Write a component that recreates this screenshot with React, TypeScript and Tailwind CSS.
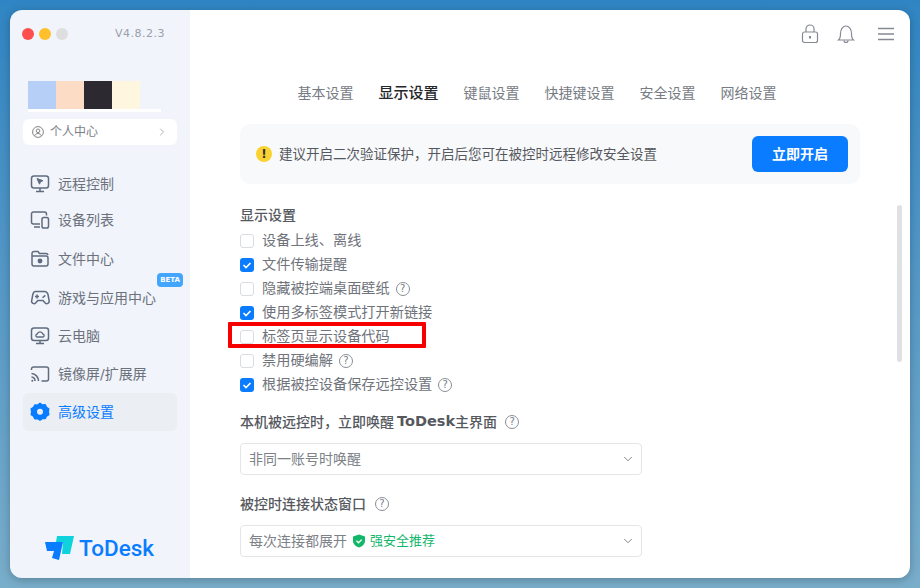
import { ChevronDown, ChevronRight } from 'lucide-react';

const FONT = '[font-family:"DejaVu_Sans","Noto_Sans_CJK_SC",sans-serif]';

function MonitorCursorIcon() {
  return (
    <svg width="20" height="20" viewBox="0 0 20 20" fill="none" stroke="#5f6b7e" strokeWidth="1.5">
      <rect x="1.5" y="2" width="17" height="12" rx="2.5" />
      <path d="M10 14v3.5M6 17.5h8" />
      <path d="M7 4.500l6 2.200-2.500 1-1 2.500z" fill="#5f6b7e" strokeWidth="1" strokeLinejoin="round" />
    </svg>
  );
}

function DevicesIcon() {
  return (
    <svg width="20" height="20" viewBox="0 0 20 20" fill="none" stroke="#5f6b7e" strokeWidth="1.5">
      <path d="M10 14H3.500a2 2 0 0 1-2-2V4a2 2 0 0 1 2-2h11a2 2 0 0 1 2 2v1.500" />
      <path d="M4 17h6" />
      <rect x="12" y="7.500" width="6.500" height="10.500" rx="1.800" />
    </svg>
  );
}

function FolderIcon() {
  return (
    <svg width="20" height="20" viewBox="0 0 20 20" fill="none" stroke="#5f6b7e" strokeWidth="1.5">
      <path d="M2 7h14a2 2 0 0 1 2 2v6a2 2 0 0 1-2 2H4a2 2 0 0 1-2-2V4.500a2 2 0 0 1 2-2h4l1.500 2H16a2 2 0 0 1 2 1.500" />
      <circle cx="10" cy="12" r="1.700" fill="#5f6b7e" />
    </svg>
  );
}

function GamepadIcon() {
  return (
    <svg width="20" height="20" viewBox="0 0 20 20" fill="none" stroke="#5f6b7e" strokeWidth="1.5">
      <path d="M5.500 3.500h9c2 0 3 1.200 3.500 3l1.200 6.500c.3 2-2.500 3.600-4 2l-2.200-2.500h-5.200L5.600 15c-1.500 1.600-4.300 0-4-2L2.800 6.500c.4-1.800 1-3 2.700-3z" />
      <path d="M5 8.500h4M7 6.500v4" />
      <path d="M12.500 9.800l2.800-2.400" />
    </svg>
  );
}

function CloudPcIcon() {
  return (
    <svg width="20" height="20" viewBox="0 0 20 20" fill="none" stroke="#5f6b7e" strokeWidth="1.5">
      <rect x="1.500" y="2" width="17" height="12.500" rx="2.500" />
      <path d="M10 14.500v3M6 17.500h8" />
      <path d="M7.500 11h5a1.500 1.500 0 0 0 .3-3 2.900 2.900 0 0 0-5.600 0 1.500 1.500 0 0 0 .3 3z" strokeWidth="1.300" />
    </svg>
  );
}

function CastIcon() {
  return (
    <svg width="20" height="20" viewBox="0 0 20 20" fill="none" stroke="#5f6b7e" strokeWidth="1.500">
      <path d="M1.500 6V5a2 2 0 0 1 2-2h13a2 2 0 0 1 2 2v10a2 2 0 0 1-2 2h-5" />
      <path d="M1.500 9.500a7.500 7.500 0 0 1 7 7.500M1.500 13a4 4 0 0 1 3.500 4" />
      <circle cx="2.300" cy="16.700" r="1" fill="#5f6b7e" stroke="none" />
    </svg>
  );
}

function GearIcon() {
  return (
    <svg width="20" height="20" viewBox="0 0 20 20">
      <path
        fill="#0a7cff"
        stroke="#0a7cff"
        strokeWidth="1.600"
        strokeLinejoin="round"
        d="M10 1.500l2.400 1.600 2.800-.2 1.200 2.500 2.300 1.500-.5 2.800.5 2.800-2.300 1.500-1.200 2.500-2.800-.2L10 18l-2.400-1.600-2.800.2-1.200-2.500-2.300-1.500.5-2.800-.5-2.800 2.300-1.500 1.200-2.500 2.800.2z"
      />
      <circle cx="10" cy="9.800" r="3" fill="#ebeef3" />
    </svg>
  );
}

function HelpIcon() {
  return (
    <span className="flex h-[14px] w-[14px] items-center justify-center rounded-full border border-[#8a8f98] text-[10px] font-normal leading-none text-[#777d87]">
      ?
    </span>
  );
}

function Checkbox({ checked }: { checked: boolean }) {
  if (checked) {
    return (
      <span className="flex h-[14px] w-[14px] shrink-0 items-center justify-center rounded-[3px] bg-[#0a7cff]">
        <svg width="10" height="10" viewBox="0 0 10 10" fill="none" stroke="white" strokeWidth="1.600">
          <path d="M1.500 5l2.500 2.500 4.500-4.500" />
        </svg>
      </span>
    );
  }
  return <span className="h-[14px] w-[14px] shrink-0 rounded-[3px] border border-[#d9dce1] bg-white" />;
}

const navItems = [
  { label: '远程控制', icon: <MonitorCursorIcon />, cls: 'mt-0' },
  { label: '设备列表', icon: <DevicesIcon />, cls: 'mt-[-2px]' },
  { label: '文件中心', icon: <FolderIcon />, cls: 'mt-px' },
  { label: '游戏与应用中心', icon: <GamepadIcon />, cls: 'mt-px', beta: true },
  { label: '云电脑', icon: <CloudPcIcon />, cls: 'mt-0' },
  { label: '镜像屏/扩展屏', icon: <CastIcon />, cls: 'mt-0' },
];

const options = [
  { label: '设备上线、离线', checked: false },
  { label: '文件传输提醒', checked: true },
  { label: '隐藏被控端桌面壁纸', checked: false, help: true },
  { label: '使用多标签模式打开新链接', checked: true },
  { label: '标签页显示设备代码', checked: false },
  { label: '禁用硬编解', checked: false, help: true },
  { label: '根据被控设备保存远控设置', checked: true, help: true },
];

const tabs = ['基本设置', '显示设置', '键鼠设置', '快捷键设置', '安全设置', '网络设置'];

function Sidebar() {
  return (
    <aside className="flex w-[180px] shrink-0 flex-col bg-[#f1f4fa] px-[13px]">
      <div className="flex h-[48px] items-center">
        <div className="ml-[-1px] flex items-center gap-[5px]">
          <span className="h-3 w-3 rounded-full bg-[#ff4f4f]" />
          <span className="h-3 w-3 rounded-full bg-[#ffc02b]" />
          <span className="h-3 w-3 rounded-full bg-[#dedede]" />
        </div>
        <span className="ml-auto mr-[12px] text-[11px] tracking-[0.5px] text-[#9a9fad]">V4.8.2.3</span>
      </div>

      <div className="mt-[23px] pl-[5px]">
        <div className="flex">
          <span className="h-[28px] w-[28px] bg-[#b5cff7]" />
          <span className="h-[28px] w-[28px] bg-[#fddcc5]" />
          <span className="h-[28px] w-[28px] bg-[#2c2a30]" />
          <span className="h-[28px] w-[28px] bg-[#fef6df]" />
        </div>
        <div className="h-[3px] w-[133px] bg-white" />
      </div>

      <div className="mt-[7px] flex h-[26px] items-center rounded-[6px] bg-white pl-[9px] pr-[9px] text-[12px] text-[#7b7f88]">
        <svg width="12" height="12" viewBox="0 0 12 12" fill="none" stroke="#777" strokeWidth="0.900">
          <circle cx="6" cy="6" r="5.400" />
          <circle cx="6" cy="4.800" r="1.800" />
          <path d="M2.800 9.700c.5-1.500 1.700-2.200 3.200-2.200s2.700.7 3.200 2.200" />
        </svg>
        <span className="ml-[6px]">个人中心</span>
        <ChevronRight className="ml-auto text-[#aeb2ba]" size={12} />
      </div>

      <nav className="mt-[20px] flex flex-col">
        {navItems.map((item) => (
          <div key={item.label} className={`relative flex h-[38px] items-center gap-[8px] pl-[7px] text-[14px] text-[#6c727d] ${item.cls}`}>
            {item.icon}
            <span>{item.label}</span>
            {item.beta && (
              <span className="absolute right-[-6px] top-[-6px] rounded-[4px] bg-[#43a5fb] px-[3px] py-[2px] text-[7px] font-bold leading-[10px] text-white">
                BETA
              </span>
            )}
          </div>
        ))}
        <div className="flex h-[38px] items-center gap-[8px] rounded-[6px] bg-[#ebeef3] pl-[7px] text-[14px] text-[#0a7cff]">
          <GearIcon />
          <span>高级设置</span>
        </div>
      </nav>

      <div className="mb-[17px] mt-auto flex items-center gap-[1px] pl-[21px]">
        <svg width="34" height="26" viewBox="0 0 34 26">
          <path d="M13 1h17l-4 18h-8l1-12h-7z" fill="#0fd2dc" />
          <path d="M1 7h18l-4 18-7-2 2-7H3z" fill="#0a7cff" />
        </svg>
        <span className="[font-family:Roboto,sans-serif] text-[22.5px] font-medium leading-none text-[#0a7cff]">ToDesk</span>
      </div>
    </aside>
  );
}

function SelectBox({ children }: { children: React.ReactNode }) {
  return (
    <div className="mt-[10px] flex h-[32px] w-[402px] items-center rounded-[4px] border border-[#e3e5e9] pl-[8px] pr-[6px] text-[14px] text-[#7d8188]">
      {children}
      <ChevronDown className="ml-auto text-[#6f7379]" size={14} strokeWidth={1.5} />
    </div>
  );
}

export default function App() {
  return (
    <div className={`h-[588px] w-[920px] overflow-hidden bg-gradient-to-b from-[#2f85c3] to-[#79aecb] p-[10px] ${FONT}`}>
      <div className="relative flex h-[568px] w-[900px] overflow-hidden rounded-[12px] shadow-[0_2px_10px_rgba(0,0,0,0.25)]">
        <Sidebar />

        <main className="relative flex-1 bg-white">
          <div className="flex items-center justify-end pr-[14px] pt-[14px]">
            <svg width="20" height="20" viewBox="0 0 20 20" fill="none" stroke="#858a92" strokeWidth="1.200">
              <rect x="2.500" y="8" width="15" height="10.500" rx="2" />
              <path d="M6 8V5a4 4 0 0 1 8 0v3" />
              <path d="M10 12v2.500" strokeWidth="2" />
            </svg>
            <svg className="ml-[16px]" width="20" height="20" viewBox="0 0 20 20" fill="none" stroke="#858a92" strokeWidth="1.200">
              <path d="M2.500 16c2-1.500 2-3 2-6.500C4.500 5 7 2 10 2s5.500 3 5.500 7.500c0 3.500 0 5 2 6.500z" />
              <path d="M8 16.500a2 2 0 0 0 4 0" />
            </svg>
            <svg className="ml-[20px]" width="20" height="20" viewBox="0 0 20 20" fill="none" stroke="#858a92" strokeWidth="1.300">
              <path d="M2 4.500h16M2 10h16M2 15.500h16" />
            </svg>
          </div>

          <div className="mt-[37px] flex justify-center gap-[25px] pr-[26px] text-[14px] leading-[24px] text-[#767b84]">
            {tabs.map((tab) =>
              tab === '显示设置' ? (
                <span key={tab} className="text-[15px] font-medium text-[#25272b]">
                  {tab}
                </span>
              ) : (
                <span key={tab}>{tab}</span>
              ),
            )}
          </div>

          <div className="ml-[50px] mt-[19px] flex h-[60px] w-[620px] items-center rounded-[10px] bg-[#f8f9fb] pl-[16px] pr-[12px]">
            <span className="flex h-4 w-4 items-center justify-center rounded-full bg-[#fad232] text-[12px] font-bold text-[#333]">!</span>
            <span className="ml-[7px] text-[13.5px] text-[#55585e]">建议开启二次验证保护，开启后您可在被控时远程修改安全设置</span>
            <button className="ml-auto flex h-[36px] w-[96px] items-center justify-center rounded-[6px] bg-[#0a7cff] text-[14px] font-bold text-white">
              立即开启
            </button>
          </div>

          <div className="ml-[50px] mt-[20px]">
            <h2 className="text-[14px] font-medium leading-[22px] text-[#55585e]">显示设置</h2>
            <div className="mt-[3px] flex flex-col">
              {options.map((o) => (
                <div key={o.label} className="flex h-[24px] items-center text-[14.2px] text-[#6f737b]">
                  <Checkbox checked={o.checked} />
                  <span className="ml-[8px]">{o.label}</span>
                  {o.help && (
                    <span className="ml-[6px]">
                      <HelpIcon />
                    </span>
                  )}
                </div>
              ))}
            </div>

            <div className="mt-[14px] flex h-[22px] items-center text-[14px] font-medium text-[#55585e]">
              本机被远控时，立即唤醒<span className="ml-[3px] text-[14.5px] font-bold">ToDesk</span>主界面
              <span className="ml-[8px]">
                <HelpIcon />
              </span>
            </div>
            <SelectBox>非同一账号时唤醒</SelectBox>

            <div className="mt-[18px] flex h-[22px] items-center text-[14px] font-medium text-[#55585e]">
              被控时连接状态窗口
              <span className="ml-[9px]">
                <HelpIcon />
              </span>
            </div>
            <SelectBox>
              每次连接都展开
              <svg className="ml-[5px]" width="14" height="14" viewBox="0 0 14 14">
                <path d="M7 .5l6 2v4.500c0 3-2.500 5.300-6 6.500C3.500 12.300 1 10 1 7V2.500z" fill="#12b76a" />
                <path d="M4.500 6.800l2 2 3.200-3.200" fill="none" stroke="white" strokeWidth="1.300" />
              </svg>
              <span className="ml-[4px] text-[13px] text-[#12b76a]">强安全推荐</span>
            </SelectBox>
          </div>

          <div className="absolute left-[707px] top-[195px] h-[157px] w-[5px] rounded-full bg-[#dfe1e5]" />
        </main>

        {/* red annotation drawn over the screenshot */}
        <div className="absolute left-[218px] top-[312px] h-[26px] w-[198px] rounded-[1px] border-[4px] border-[#f60000]" />
      </div>
    </div>
  );
}
